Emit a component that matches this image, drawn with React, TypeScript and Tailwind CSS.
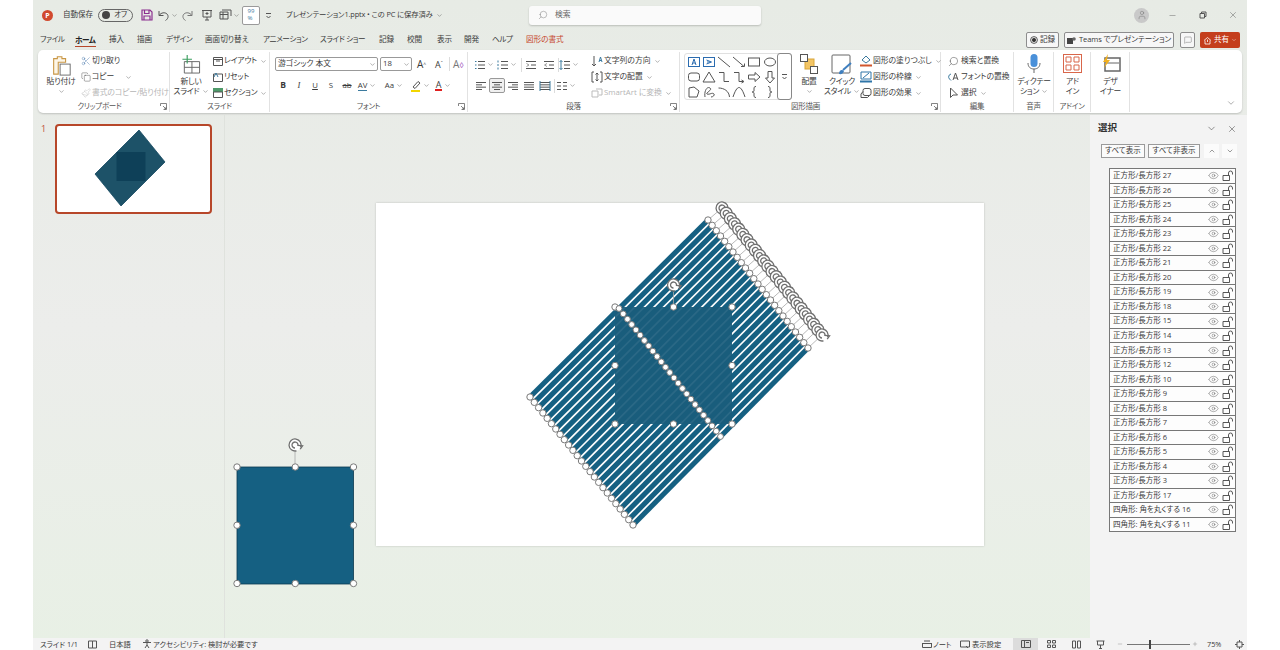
import React from 'react';
import { ChevronDown, ChevronUp, Eye, Search, X, Minus, Scissors, Copy, Paintbrush, MessageSquare, User, Plus } from 'lucide-react';

const LAYERS = [
  '正方形/長方形 27', '正方形/長方形 26', '正方形/長方形 25', '正方形/長方形 24', '正方形/長方形 23',
  '正方形/長方形 22', '正方形/長方形 21', '正方形/長方形 20', '正方形/長方形 19', '正方形/長方形 18',
  '正方形/長方形 15', '正方形/長方形 14', '正方形/長方形 13', '正方形/長方形 12', '正方形/長方形 10',
  '正方形/長方形 9', '正方形/長方形 8', '正方形/長方形 7', '正方形/長方形 6', '正方形/長方形 5',
  '正方形/長方形 4', '正方形/長方形 3', '正方形/長方形 17', '四角形: 角を丸くする 16', '四角形: 角を丸くする 11',
];

// label, slot width up to the next tab, katakana heavy
const TABS: [string, number, boolean][] = [
  ['ファイル', 22, true], ['ホーム', 21, true], ['挿入', 15, false], ['描画', 16, false], ['デザイン', 26, true],
  ['画面切り替え', 45, false], ['アニメーション', 44, true], ['スライド ショー', 46, true], ['記録', 15, false],
  ['校閲', 17, false], ['表示', 14, false], ['開発', 15, false], ['ヘルプ', 21, true],
];

const STRIPES = 25;
const stripes = Array.from({ length: STRIPES }, (_, i) => {
  const t = i / (STRIPES - 1);
  const a = { x: 530 + 103 * t, y: 397 + 128 * t };
  const b = { x: 708 + 100 * t, y: 220 + 128 * t };
  const m = { x: (a.x + b.x) / 2, y: (a.y + b.y) / 2 };
  const r = { x: 722 + 100 * t, y: 208 + 127 * t };
  return { a, b, m, r };
});

const Ic = ({ w = 12, h = 12, vb, children, className = '' }: { w?: number; h?: number; vb?: string; children: React.ReactNode; className?: string }) => (
  <svg width={w} height={h} viewBox={vb || `0 0 ${w} ${h}`} fill="none" stroke="#555" strokeWidth="1" className={`shrink-0 ${className}`}>
    {children}
  </svg>
);

const Chev = ({ className = '' }: { className?: string }) => <ChevronDown size={7} strokeWidth={1.5} className={`shrink-0 text-[#555] ${className}`} />;

// small stacked ribbon row
const Row = ({ icon, label, chev, muted, iconW = 11 }: { icon: React.ReactNode; label: string; chev?: boolean; muted?: boolean; iconW?: number }) => (
  <div className={`h-4 flex items-center whitespace-nowrap ${muted ? 'text-[#b5b5b5]' : ''}`}>
    <span className="flex justify-center shrink-0" style={{ width: iconW }}>{icon}</span>
    <span className="ml-[1px]">{label}</span>
    {chev && <Chev className="ml-[3px]" />}
  </div>
);

const Big = ({ w, icon, lines, chev, chevBelow }: { w: number; icon: React.ReactNode; lines: string[]; chev?: boolean; chevBelow?: boolean }) => (
  <div className="flex flex-col items-center shrink-0 leading-[10px] whitespace-nowrap tracking-[-0.2px]" style={{ width: w }}>
    <div className="h-[24px] pt-[2px] flex items-start justify-center">{icon}</div>
    {lines.map((l, i) => (
      <div key={l} className="flex items-center h-[10px]">
        {l}
        {chev && i === lines.length - 1 && <Chev className="ml-[2px]" />}
      </div>
    ))}
    {chevBelow && <Chev className="mt-[2px]" />}
  </div>
);

const Launcher = () => (
  <svg width="7" height="7" viewBox="0 0 7 7" fill="none" stroke="#666" strokeWidth="0.8" className="absolute right-[2px] top-[3px]">
    <path d="M0.5 3V0.5H6.5V6.5H3.5M3 3L6 6M6 4V6H4" />
  </svg>
);

const Group = ({ w, label, launcher, children, last, labelClass = '' }: { w: number; label?: string; launcher?: boolean; children: React.ReactNode; last?: boolean; labelClass?: string }) => (
  <div className={`relative flex flex-col shrink-0 h-[60px] mt-[2px] ${last ? '' : 'border-r border-[#e2e2e2]'}`} style={{ width: w }}>
    <div className="h-[48px] flex">{children}</div>
    <div className={`relative h-[12px] pt-[2px] flex items-center justify-center text-[7.5px] tracking-[-0.3px] text-[#555] ${labelClass}`}>
      {label}
      {launcher && <Launcher />}
    </div>
  </div>
);

// lines icon for list and alignment buttons
const Lines = ({ rows, extra }: { rows: [number, number][]; extra?: React.ReactNode }) => (
  <Ic>
    {rows.map(([a, b], i) => (
      <path key={i} d={`M${a} ${2.5 + (i * 7) / (rows.length - 1)}H${b}`} />
    ))}
    {extra}
  </Ic>
);

const Sep = () => <div className="w-px h-[14px] bg-[#dcdcdc] shrink-0" />;

const Cell = ({ w, children, selected }: { w: number; children: React.ReactNode; selected?: boolean }) => (
  <div className={`h-[15px] flex items-center justify-center shrink-0 ${selected ? 'border border-[#999] rounded-[2px] bg-[#f0f0f0]' : ''}`} style={{ width: w }}>
    {children}
  </div>
);

const OpenLock = () => (
  <svg width="12" height="11" viewBox="0 0 12 11" fill="none" stroke="#444" strokeWidth="0.9" className="ml-[3px] shrink-0">
    <path d="M1 5.5H7.500V10.500H1ZM6.500 5.500V3A2 2 0 0 1 10.500 3V4.500" />
  </svg>
);

const GALLERY: React.ReactNode[] = [
  <><rect x="1.5" y="2.5" width="11" height="9" stroke="#2b6cb0" /><path d="M5 10L7 4L9 10M5.8 8H8.2" stroke="#2b6cb0" /></>,
  <><rect x="1.5" y="2.5" width="11" height="9" stroke="#2b6cb0" /><path d="M4.5 5L9.5 7L4.5 9M5 7H8" stroke="#2b6cb0" /></>,
  <path d="M1 2L13 12" />,
  <path d="M1 2L12 11.5M9 11.5H12.5V8.5" />,
  <rect x="1.5" y="3" width="11" height="8" />,
  <ellipse cx="7" cy="7" rx="5.5" ry="4" />,
  <rect x="1.5" y="3" width="11" height="8" rx="2.5" />,
  <path d="M7 2L13 12H1Z" />,
  <path d="M2 2.5H7V11.5H12" />,
  <path d="M2 2.5H7V11.5H11M9.5 10L12 11.5L9.5 13" />,
  <path d="M1.5 5H8V2.5L13 7L8 11.5V9H1.5Z" />,
  <path d="M5 1.5V8H2.5L7 13L11.5 8H9V1.5Z" />,
  <path d="M2 12V3L7 2L12 6L10 12Z" />,
  <path d="M3 12C2 6 5 1 8 3C11 5 3 8 5 9C8 10 10 7 12 9C13 10 11 12 9 12" />,
  <path d="M1.5 3C7 3 12 6 12.5 12" />,
  <path d="M1 12C3 6 5 2.5 7 2.5C9 2.5 11 6 13 12" />,
  <path d="M9 1.5C7 1.5 7 2.5 7 4V6C7 6.5 6 7 5 7C6 7 7 7.5 7 8V10C7 11.5 7 12.5 9 12.5" />,
  <path d="M5 1.5C7 1.5 7 2.5 7 4V6C7 6.5 8 7 9 7C8 7 7 7.5 7 8V10C7 11.5 7 12.5 5 12.5" />,
];

const Handle = ({ x, y, r = 3.2 }: { x: number; y: number; r?: number }) => (
  <circle cx={x} cy={y} r={r} fill="#fff" stroke="#7a7a7a" strokeWidth="1" />
);

// outer ring, inner arc and arrow tip of PowerPoint's rotate handle
const Rot = ({ x, y }: { x: number; y: number }) => (
  <g fill="none" stroke="#6f6f6f" strokeWidth="1.3">
    <circle cx={x} cy={y} r="6" fill="#fff" stroke="none" />
    <path d={`M${x + 5.6} ${y + 2.2}A6 6 0 1 0 ${x + 1.5} ${y + 5.8}`} />
    <path d={`M${x + 2.9} ${y + 0.8}A3 3 0 1 0 ${x} ${y + 3}`} />
    <path d={`M${x + 2.6} ${y + 0.4}L${x + 7.6} ${y + 0.9}L${x + 5.2} ${y + 4.2}`} />
  </g>
);

const Squares = ({ x, y, s }: { x: number; y: number; s: number }) => {
  const pts = [0, 0.5, 1];
  return (
    <>
      {pts.flatMap((a) => pts.map((b) => (a === 0.5 && b === 0.5 ? null : <Handle key={`${a}${b}`} x={x + a * s} y={y + b * s} />)))}
    </>
  );
};

const SlideCanvas = () => (
  <svg viewBox="225 115 865 523" width="865" height="523" className="absolute left-0 top-0">
    {stripes.map((s, i) => (
      <line key={i} x1={s.a.x} y1={s.a.y} x2={s.b.x} y2={s.b.y} stroke="#156082" strokeWidth="5.1" />
    ))}
    <rect x="615" y="307" width="117" height="117" fill="#1a5c7c" fillOpacity="0.93" />
    {stripes.map((s, i) => (
      <line key={i} x1={s.b.x} y1={s.b.y} x2={s.r.x} y2={s.r.y} stroke="#a8a8a8" strokeWidth="0.8" />
    ))}
    {stripes.map((s, i) => <Rot key={i} x={s.r.x} y={s.r.y} />)}
    {stripes.map((s, i) => <Handle key={i} x={s.b.x} y={s.b.y} />)}
    {stripes.map((s, i) => <Handle key={i} x={s.a.x} y={s.a.y} />)}
    <path d="M673.5 307V292" stroke="#a8a8a8" strokeWidth="0.8" />
    <Rot x={673.5} y={285} />
    <Squares x={615} y={307} s={117} />
    {stripes.map((s, i) => <Handle key={i} x={s.m.x} y={s.m.y} r={2.9} />)}

    <rect x="237" y="467" width="116.5" height="117" fill="#156082" stroke="#0c3a50" strokeWidth="0.8" />
    <path d="M295 467V452" stroke="#a8a8a8" strokeWidth="0.8" />
    <Rot x={295} y={445} />
    <Squares x={237} y={467} s={116.5} />
  </svg>
);

const Thumb = () => (
  <div className="relative ml-[22px] mt-[9px] w-[157px] h-[90px] border-2 border-[#b7472a] rounded-[4px] bg-white overflow-hidden">
    <svg viewBox="57 126 153 86" width="153" height="86" className="absolute left-0 top-0">
      <path d="M139 130L165 162L121 206L95 174Z" fill="#1d5268" stroke="#144860" strokeWidth="0.8" />
      <rect x="116.500" y="152" width="29" height="29" fill="#0e4058" />
    </svg>
  </div>
);

export default function App() {
  return (
    <div className="w-[1280px] h-[650px] overflow-hidden bg-white px-[33px] [font-family:'Open_Sans','Noto_Sans_CJK_JP',sans-serif] [font-feature-settings:'palt'] text-[7.8px] text-[#3a3a3a]">
      <div className="h-full flex flex-col bg-gradient-to-b from-[#e7ebe5] via-[#ecedeb] to-[#e8f0e5]">
        {/* title bar */}
        <div className="h-[30px] shrink-0 flex items-center pl-[9px]">
          <div className="w-[11px] h-[11px] rounded-full bg-[#d1492e] text-white text-[7px] font-bold flex items-center justify-center leading-none">P</div>
          <span className="ml-[10px] w-[30px] text-[7.5px] whitespace-nowrap">自動保存</span>
          <div className="ml-[5px] w-[35px] h-[13px] rounded-full border border-[#666] flex items-center pl-[3px] gap-[4px]">
            <div className="w-[8px] h-[8px] rounded-full bg-[#444]" />
            <span className="text-[7.5px]">オフ</span>
          </div>
          <svg width="12" height="12" viewBox="0 0 12 12" fill="none" stroke="#8b2f8f" strokeWidth="1.200" className="ml-[8px]">
            <path d="M1 1H9L11 3V11H1ZM3.500 1V4.500H8V1M3 11V7H9V11" />
          </svg>
          <Ic w={12} h={13} className="ml-[4px]"><path d="M2 2V6.500H6.500M2.300 6.300C4 3.500 8 3 10 5C12 7 11 10 8.500 11.500" /></Ic>
          <Chev className="ml-[2px]" />
          <Ic w={12} h={13} className="ml-[4px]"><path d="M10 2V6.500H5.500M9.700 6.300C8 3.500 4 3 2 5C0 7 1 10 3.500 11.500" stroke="#777" /></Ic>
          <Ic w={12} h={12} className="ml-[7px]"><path d="M1 1.500H11M2 1.500V8H10V1.500M6 8V11M4 11H8M6 3V6M4.500 4.500H7.500" /></Ic>
          <Ic w={13} h={12} className="ml-[6px]"><path d="M1 3H9V10H1ZM1 5.500H9M4 3V10M3 1H12V7" /></Ic>
          <Chev className="ml-[1px]" />
          <div className="ml-[2px] w-[18px] h-[19px] bg-white border border-[#9a9a9a] rounded-[2px] flex items-center justify-center">
            <span className="text-[6px] text-[#3b7a9e] leading-[7px]">99<br />%</span>
          </div>
          <svg width="7" height="7" viewBox="0 0 7 7" fill="none" stroke="#555" className="ml-[5px]"><path d="M1 1.500H6M1.500 4L3.500 6L5.500 4" /></svg>
          <span className="ml-[14px] w-[147px] text-[7.4px] whitespace-nowrap tracking-[-0.15px]">プレゼンテーション1.pptx • この PC に保存済み</span>
          <Chev className="ml-[3px]" />
          <div className="ml-[86px] w-[232px] h-[19px] bg-[#fafafa] rounded-[3px] shadow-[0_1px_2px_rgba(0,0,0,0.2)] flex items-center pl-[9px] text-[#666]">
            <Search size={10} strokeWidth={1} className="-scale-x-100" />
            <span className="ml-[7px]">検索</span>
          </div>
          <div className="ml-auto flex items-center pr-[9px]">
            <div className="w-[15px] h-[15px] rounded-full bg-[#c9c9c9] flex items-center justify-center">
              <User size={10} strokeWidth={1} className="text-[#666]" />
            </div>
            <Minus size={9} strokeWidth={1} className="ml-[19px] text-[#444]" />
            <Ic w={8} h={8} className="ml-[22px]"><path d="M1 2.500H5.500V7H1ZM2.500 2.500V1H7V5.500H5.500" /></Ic>
            <X size={10} strokeWidth={1} className="ml-[21px] text-[#444]" />
          </div>
        </div>

        {/* tabs */}
        <div className="h-[20px] shrink-0 flex items-center pl-[7px] pr-[7px] text-[7.6px]">
          <div className="flex items-center gap-[13px] whitespace-nowrap">
            {TABS.map(([t, w, kana]) => (
              <span
                key={t}
                style={{ width: w }}
                className={`${kana ? 'tracking-[-0.4px]' : ''} ${t === 'ホーム' ? 'font-bold text-[#222] border-b-[1.5px] border-[#b7472a] leading-[12px]' : ''}`}
              >
                {t}
              </span>
            ))}
            <span className="text-[#c5452b]">図形の書式</span>
          </div>
          <div className="ml-auto flex items-center">
            <div className="h-[16px] w-[33px] border border-[#8d8d8d] rounded-[2px] bg-[#f7f7f7] flex items-center justify-center gap-[2px]">
              <svg width="8" height="8" viewBox="0 0 8 8" fill="none" stroke="#333" strokeWidth="0.8"><circle cx="4" cy="4" r="3.400" /><circle cx="4" cy="4" r="1.700" fill="#333" /></svg>
              記録
            </div>
            <div className="ml-[5px] h-[16px] w-[110px] border border-[#8d8d8d] rounded-[2px] bg-[#f7f7f7] flex items-center justify-center gap-[3px] whitespace-nowrap tracking-[-0.1px]">
              <svg width="9" height="9" viewBox="0 0 9 9" className="shrink-0"><rect x="0" y="2" width="6" height="6" fill="#444" /><circle cx="7" cy="3" r="1.800" fill="#666" /></svg>
              Teams でプレゼンテーション
            </div>
            <div className="ml-[6px] h-[16px] w-[15px] border border-[#8d8d8d] rounded-[2px] bg-[#f7f7f7] flex items-center justify-center">
              <MessageSquare size={8} strokeWidth={1} />
            </div>
            <div className="ml-[5px] h-[16px] w-[40px] rounded-[2px] bg-[#c43e1c] text-white flex items-center justify-center gap-[2px] whitespace-nowrap">
              <svg width="9" height="9" viewBox="0 0 9 9" fill="none" stroke="#fff" strokeWidth="0.8"><path d="M1 4.500L4.500 1.500L8 4.500M2 4.500V8H7V4.500M4.500 3.500V6" /></svg>
              共有
              <ChevronDown size={6} strokeWidth={1.500} className="text-white" />
            </div>
          </div>
        </div>

        {/* ribbon */}
        <div className="mx-[5px] h-[63px] shrink-0 bg-white rounded-[5px] shadow-[0_1px_2px_rgba(0,0,0,0.18)] flex">
          <Group w={132} label="クリップボード" launcher labelClass="pr-[8px]">
            <div className="ml-[5px]">
              <Big
                w={36}
                lines={['貼り付け']}
                chevBelow
                icon={
                  <svg width="22" height="22" viewBox="0 0 22 24" fill="none">
                    <path d="M3 5H7V3H12V5H16V9H8V22H3Z" stroke="#c99746" strokeWidth="1.200" fill="#fdf6e8" />
                    <rect x="10" y="11" width="11" height="12" stroke="#666" fill="#fff" />
                  </svg>
                }
              />
            </div>
            <div className="ml-[1px] pt-[1px] tracking-[-0.1px]">
              <Row icon={<Scissors size={10} strokeWidth={1} className="text-[#3b6ea5]" />} label="切り取り" />
              <div className="flex items-center">
                <Row icon={<Copy size={10} strokeWidth={1} />} label="コピー" />
                <Chev className="ml-[11px]" />
              </div>
              <Row muted icon={<Paintbrush size={10} strokeWidth={1} />} label="書式のコピー/貼り付け" />
            </div>
          </Group>

          <Group w={100} label="スライド">
            <div className="ml-[5px]">
              <Big
                w={32}
                lines={['新しい', 'スライド']}
                chev
                icon={
                  <svg width="20" height="20" viewBox="0 0 20 21" fill="none">
                    <path d="M3 8H19V20H3ZM11 8V20M3 14H19" stroke="#666" />
                    <path d="M6 1V10M1 5.500H11" stroke="#3b9e5f" strokeWidth="1.200" />
                  </svg>
                }
              />
            </div>
            <div className="ml-[5px] pt-[1px] tracking-[-0.2px]">
              <Row chev icon={<Ic w={10} h={9}><path d="M.5 .5H9.500V8.500H.5ZM.5 2.500H9.500M3 4H7" /></Ic>} label="レイアウト" />
              <Row icon={<Ic w={10} h={10}><path d="M.5 2H9.500V9.500H.5Z" /><path d="M1 5L3 1L5 5" stroke="#3b7a9e" /></Ic>} label="リセット" />
              <Row chev icon={<Ic w={10} h={10}><rect x=".5" y=".5" width="9" height="3" fill="#4f9a6a" stroke="#4f9a6a" /><path d="M.5 4H9.500V9.500H.5Z" /></Ic>} label="セクション" />
            </div>
          </Group>

          <Group w={198} label="フォント" launcher>
            <div className="pl-[5px] pt-[5px]">
              <div className="flex items-center h-[14px]">
                <div className="w-[103px] h-[14px] border border-[#999] rounded-[2px] flex items-center justify-between pl-[2px] pr-[1px]">
                  游ゴシック 本文
                  <Chev />
                </div>
                <div className="ml-[2px] w-[32px] h-[14px] border border-[#999] rounded-[2px] flex items-center justify-between pl-[2px] pr-[1px]">
                  18
                  <Chev />
                </div>
                <span className="ml-[5px] w-[16px] text-[10px] leading-none">A<sup className="text-[5px]">^</sup></span>
                <span className="ml-[2px] w-[14px] text-[9px] leading-none">A<sup className="text-[5px]">ˇ</sup></span>
                <Sep />
                <span className="ml-[3px] text-[10px] text-[#777] whitespace-nowrap">A<span className="text-[8px] text-[#a14fbd]">◊</span></span>
              </div>
              <div className="flex items-center h-[15px] mt-[7px]">
                <Cell w={16}><b className="text-[8.5px]">B</b></Cell>
                <Cell w={16}><i className="text-[8.5px] [font-family:'Liberation_Serif',serif]">I</i></Cell>
                <Cell w={16}><u>U</u></Cell>
                <Cell w={16}><span>S</span></Cell>
                <Cell w={16}><span className="line-through">ab</span></Cell>
                <Cell w={24}><span className="border-b border-[#3b7a9e] leading-[9px]">AV</span><Chev className="ml-[2px]" /></Cell>
                <Cell w={30}><span>Aa</span><Chev className="ml-[2px]" /></Cell>
                <Cell w={22}>
                  <svg width="12" height="12" viewBox="0 0 12 12" fill="none"><path d="M3 7L8 1.500L10 3L5 8.500Z" stroke="#555" /><path d="M1 11H10" stroke="#f2d600" strokeWidth="2" /></svg>
                  <Chev className="ml-[1px]" />
                </Cell>
                <Cell w={24}>
                  <span className="text-[9px] leading-[9px] border-b-2 border-[#e02020] px-[1px]">A</span>
                  <Chev className="ml-[2px]" />
                </Cell>
              </div>
            </div>
          </Group>

          <Group w={212} label="段落" launcher>
            <div className="w-[123px] pl-[5px] pt-[5px] shrink-0">
              <div className="flex items-center h-[15px]">
                <Cell w={22}><Lines rows={[[4, 11], [4, 11], [4, 11]]} extra={<path d="M1 2.500H2.500M1 6H2.500M1 9.500H2.500" stroke="#3b7a9e" />} /><Chev className="ml-[1px]" /></Cell>
                <Cell w={24}><Lines rows={[[4, 11], [4, 11], [4, 11]]} extra={<path d="M1 1.500V3.500M1 5V7M1 8.500V10.500" stroke="#3b7a9e" />} /><Chev className="ml-[1px]" /></Cell>
                <div className="ml-[2px]"><Sep /></div>
                <Cell w={18}><Lines rows={[[1, 11], [6, 11], [1, 11]]} extra={<path d="M1.500 4.500L4 6L1.500 7.500" stroke="#999" />} /></Cell>
                <Cell w={18}><Lines rows={[[1, 11], [6, 11], [1, 11]]} extra={<path d="M4 4.500L1.500 6L4 7.500" stroke="#999" />} /></Cell>
                <Sep />
                <Cell w={20}><Lines rows={[[5, 11], [5, 11], [5, 11]]} extra={<path d="M2 1.500V10.500M.5 3L2 1.500L3.500 3M.5 9L2 10.500L3.500 9" stroke="#3b7a9e" />} /><Chev className="ml-[1px]" /></Cell>
              </div>
              <div className="flex items-center h-[15px] mt-[6px]">
                <Cell w={16}><Lines rows={[[1, 11], [1, 7], [1, 11], [1, 7]]} /></Cell>
                <Cell w={16} selected><Lines rows={[[1, 11], [3, 9], [1, 11], [3, 9]]} /></Cell>
                <Cell w={16}><Lines rows={[[1, 11], [5, 11], [1, 11], [5, 11]]} /></Cell>
                <Cell w={16}><Lines rows={[[1, 11], [1, 11], [1, 11], [1, 11]]} /></Cell>
                <Cell w={16}><Lines rows={[[1, 11], [1, 11], [1, 11], [1, 11]]} extra={<path d="M1 1V11M11 1V11" stroke="#3b7a9e" />} /></Cell>
                <div className="ml-[1px]"><Sep /></div>
                <Cell w={22}><Lines rows={[[1, 5], [1, 5], [1, 5]]} extra={<path d="M7 2.500H11M7 6H11M7 9.500H11" />} /><Chev className="ml-[1px]" /></Cell>
              </div>
            </div>
            <div className="pt-[1px]">
              <Row iconW={12} chev icon={<Ic w={12} h={13}><path d="M3 1V11M1 9L3 11L5 9" /><path d="M8 7L9.500 2L11 7M8.500 5.500H10.500" stroke="#3b7a9e" /></Ic>} label="文字列の方向" />
              <Row iconW={12} chev icon={<Ic w={12} h={12}><path d="M3 1H1V11H3M9 1H11V11H9M6 2V10M4.500 3.500L6 2L7.500 3.500M4.500 8.500L6 10L7.500 8.500" /></Ic>} label="文字の配置" />
              <Row iconW={12} muted chev icon={<Ic w={12} h={11}><path d="M1 3H7V9H1ZM5 1H11V7H8" stroke="#bbb" /></Ic>} label="SmartArt に変換" />
            </div>
          </Group>

          <Group w={261} label="図形描画" launcher labelClass="pr-[9px]">
            <div className="ml-[4px] mt-[1px] h-[47px] w-[108px] flex shrink-0 border border-[#e0e0e0] rounded-[3px]">
              <div className="w-[93px] grid grid-cols-6 content-center pl-[1px]">
                {GALLERY.map((g, i) => (
                  <div key={i} className="h-[15px] flex items-center justify-center"><Ic w={14} h={14}>{g}</Ic></div>
                ))}
              </div>
              <div className="w-[15px] border border-[#888] rounded-[3px] flex items-center justify-center -my-px -mr-px">
                <svg width="7" height="7" viewBox="0 0 7 7" fill="none" stroke="#555"><path d="M1 1.500H6M1.500 4L3.500 6L5.500 4" /></svg>
              </div>
            </div>
            <div className="ml-[2px]">
              <Big
                w={30}
                lines={['配置']}
                chevBelow
                icon={
                  <svg width="18" height="20" viewBox="0 0 18 20" fill="none">
                    <rect x="5" y="5" width="9" height="10" fill="#f3c565" stroke="#d9a63a" />
                    <rect x=".5" y=".5" width="7" height="7" fill="#fff" stroke="#555" />
                    <rect x="10.500" y="12.500" width="7" height="7" fill="#fff" stroke="#555" />
                  </svg>
                }
              />
            </div>
            <div className="ml-[1px]">
              <Big
                w={34}
                lines={['クイック', 'スタイル']}
                chev
                icon={
                  <svg width="22" height="22" viewBox="0 0 22 22" fill="none">
                    <rect x="1" y="1" width="18" height="18" stroke="#666" rx="1" />
                    <path d="M20 9L12 16" stroke="#3f7fbf" strokeWidth="2" />
                    <path d="M8 20C8 16 11 15 13 17C12 20 10 20.500 8 20Z" fill="#3f7fbf" />
                  </svg>
                }
              />
            </div>
            <div className="pt-[1px]">
              <Row iconW={13} chev icon={<Ic w={12} h={12}><path d="M6 1L10 5L6 8L2 5Z" stroke="#3b7a9e" /><path d="M0 10.500H12" stroke="#d1572e" strokeWidth="2" /></Ic>} label="図形の塗りつぶし" />
              <Row iconW={13} chev icon={<Ic w={12} h={12}><path d="M1 1H11V8H1Z" stroke="#2e75a8" /><path d="M3 7L9 2" stroke="#2e75a8" /><path d="M0 10.500H12" stroke="#2e75a8" strokeWidth="2" /></Ic>} label="図形の枠線" />
              <Row iconW={13} chev icon={<Ic w={12} h={12}><rect x="3" y="1.500" width="8" height="7" rx="2" /><path d="M3 4.500L1 7V10.500H7.500L9.500 8.500" /></Ic>} label="図形の効果" />
            </div>
          </Group>

          <Group w={73} label="編集">
            <div className="ml-[6px] pt-[1px]">
              <Row iconW={13} icon={<Search size={11} strokeWidth={1} className="-scale-x-100" />} label="検索と置換" />
              <Row iconW={13} icon={<Ic w={12} h={12}><path d="M5 9L7.500 2L10 9M6 7H9" /><path d="M3 3A3 3 0 0 0 1.500 8L3 9.500" stroke="#3b7a9e" /></Ic>} label="フォントの置換" />
              <Row iconW={13} chev icon={<Ic w={11} h={12}><path d="M2.500 1L2.500 10.500L5 8H9.500Z" /></Ic>} label="選択" />
            </div>
          </Group>

          <Group w={40} label="音声">
            <Big
              w={40}
              lines={['ディクテー', 'ション']}
              chev
              icon={
                <svg width="14" height="21" viewBox="0 0 14 21" fill="none">
                  <rect x="3.500" y="0" width="7" height="13" rx="3.500" fill="#4a90d9" />
                  <path d="M1 9C1 13 3.500 15 7 15C10.500 15 13 13 13 9M7 15V19" stroke="#666" />
                </svg>
              }
            />
          </Group>

          <Group w={37} label="アドイン">
            <Big
              w={37}
              lines={['アド', 'イン']}
              icon={
                <svg width="19" height="19" viewBox="0 0 19 19" fill="none" stroke="#d9664a">
                  <rect x=".5" y=".5" width="18" height="18" />
                  <path d="M3 3H8V8H3ZM11 3H16V8H11ZM3 11H8V16H3ZM11 11H16V16H11Z" />
                </svg>
              }
            />
          </Group>

          <Group w={39}>
            <Big
              w={39}
              lines={['デザ', 'イナー']}
              icon={
                <svg width="20" height="18" viewBox="0 0 20 18" fill="none">
                  <rect x="4" y="4" width="15" height="13" stroke="#666" strokeWidth="1.500" />
                  <path d="M5 9H18" stroke="#666" />
                  <path d="M7 0L2 8H5L3 14L9 6H6Z" fill="#f2b01e" />
                </svg>
              }
            />
          </Group>

          <div className="flex-1 flex items-end justify-end pr-[6px] pb-[5px]">
            <ChevronDown size={10} strokeWidth={1} />
          </div>
        </div>

        {/* main area */}
        <div className="flex-1 min-h-0 mt-[2px] flex">
          <div className="w-[192px] shrink-0 flex items-start border-r border-[#dfe2dd] relative">
            <span className="absolute left-[8px] top-[7px] text-[9px] text-[#c0503a]">1</span>
            <Thumb />
          </div>
          <div className="relative flex-1 overflow-hidden">
            <div className="absolute left-[151px] top-[88px] w-[608px] h-[343px] bg-white shadow-[0_0_2px_rgba(0,0,0,0.2)]" />
            <SlideCanvas />
          </div>
          <div className="w-[157px] shrink-0 bg-[#f3f3f3] flex flex-col">
            <div className="h-[27px] flex items-center pl-[8px] pr-[10px]">
              <span className="text-[9.5px] font-bold text-[#333]">選択</span>
              <ChevronDown size={11} strokeWidth={1.2} className="ml-auto" />
              <X size={10} strokeWidth={1.2} className="ml-[10px]" />
            </div>
            <div className="flex items-center pl-[11px] h-[14px] mt-[2px]">
              <div className="w-[44px] h-[14px] border border-[#9a9a9a] bg-[#fbfbfb] flex items-center justify-center whitespace-nowrap text-[7.5px]">すべて表示</div>
              <div className="ml-[3px] w-[52px] h-[14px] border border-[#9a9a9a] bg-[#fbfbfb] flex items-center justify-center whitespace-nowrap text-[7.5px]">すべて非表示</div>
              <div className="ml-[4px] w-[15px] h-[14px] bg-[#fbfbfb] flex items-center justify-center"><ChevronUp size={8} strokeWidth={1.500} /></div>
              <div className="ml-[3px] w-[15px] h-[14px] bg-[#fbfbfb] flex items-center justify-center"><ChevronDown size={8} strokeWidth={1.500} /></div>
            </div>
            <div className="ml-[19px] mt-[10px] w-[127px]">
              {LAYERS.map((l) => (
                <div key={l} className="h-[15.54px] -mb-px border border-[#777] bg-[#fdfdfd] flex items-center pl-[3px] pr-[1px] text-[7.5px] whitespace-nowrap">
                  {l}
                  <Eye size={11} strokeWidth={0.9} className="ml-auto text-[#444]" />
                  <OpenLock />
                </div>
              ))}
            </div>
          </div>
        </div>

        {/* status bar */}
        <div className="h-[12px] shrink-0 bg-[#f3f3f3] flex items-center pl-[7px] text-[7.3px] whitespace-nowrap overflow-hidden">
          <span className="w-[35px]">スライド 1/1</span>
          <Ic w={9} h={9} className="ml-[13px]"><path d="M.5 1H4.500V8H.5ZM4.500 1H8.500V8H4.500Z" /></Ic>
          <span className="ml-[12px] w-[21px]">日本語</span>
          <Ic w={10} h={10} className="ml-[12px]"><circle cx="5" cy="2" r="1.200" /><path d="M1 3.500H9M5 4V6L3 9M5 6L7 9" /></Ic>
          <span className="ml-[1px]">アクセシビリティ: 検討が必要です</span>
          <div className="ml-auto flex items-center h-full pr-[3px]">
            <Ic w={10} h={8}><path d="M2 1H8M0 3.500H10M.5 3.500V7.500H9.500V3.500" /></Ic>
            <span className="ml-[1px] w-[17px]">ノート</span>
            <Ic w={10} h={9} className="ml-[10px]"><path d="M.5 1H9.500V7H.5ZM6 6L8 8" /></Ic>
            <span className="ml-[2px] w-[29px]">表示設定</span>
            <div className="ml-[12px] w-[25px] h-full bg-[#dcdcdc] flex items-center justify-center">
              <Ic w={10} h={8}><path d="M.5 .5H9.500V7.500H.5ZM3.500 .5V7.500M5 2.500H8" /></Ic>
            </div>
            <Ic w={9} h={8} className="ml-[9px]"><path d="M.5 .5H3.500V3H.5ZM5.500 .5H8.500V3H5.500ZM.5 5H3.500V7.500H.5ZM5.500 5H8.500V7.500H5.500Z" /></Ic>
            <Ic w={9} h={9} className="ml-[16px]"><path d="M.5 1H3.500V8H.5ZM5.500 1H8.500V8H5.500Z" /></Ic>
            <Ic w={9} h={9} className="ml-[15px]"><path d="M.5 1H8.500M1.500 1V5H7.500V1M4.500 5V8M3 8.500H6" /></Ic>
            <Minus size={6} strokeWidth={1} className="ml-[12px]" />
            <div className="relative w-[63px] h-px bg-[#777] ml-[4px]">
              <div className="absolute left-[22px] top-[-4px] w-[2px] h-[9px] bg-[#444]" />
            </div>
            <Plus size={6} strokeWidth={1} className="ml-[2px]" />
            <span className="ml-[9px] w-[16px]">75%</span>
            <Ic w={9} h={9} className="ml-[12px]"><path d="M2 2H7V7H2ZM4.500 0V2M4.500 7V9M0 4.500H2M7 4.500H9" /></Ic>
          </div>
        </div>
      </div>
    </div>
  );
}
